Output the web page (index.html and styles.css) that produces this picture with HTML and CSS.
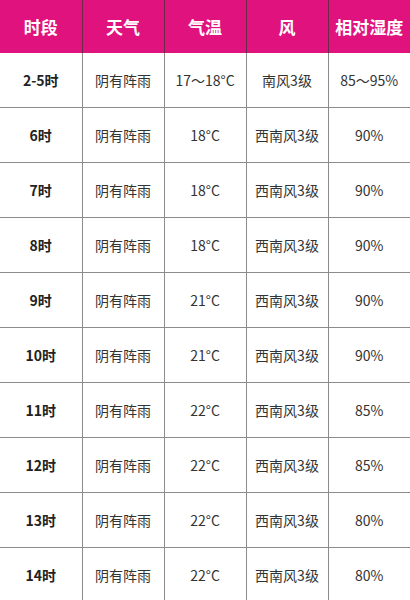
FILE: index.html
```html
<!DOCTYPE html>
<html lang="zh">
<head>
<meta charset="utf-8">
<link rel="stylesheet" href="styles.css">
</head>
<body>
<table class="weather">
  <colgroup><col class="c"><col class="c"><col class="c"><col class="c"><col class="c"></colgroup>
  <thead>
    <tr><th>时段</th><th>天气</th><th>气温</th><th>风</th><th>相对湿度</th></tr>
  </thead>
  <tbody>
    <tr><td class="t">2-5时</td><td>阴有阵雨</td><td>17～18°C</td><td>南风3级</td><td>85～95%</td></tr>
    <tr><td class="t">6时</td><td>阴有阵雨</td><td>18°C</td><td>西南风3级</td><td>90%</td></tr>
    <tr><td class="t">7时</td><td>阴有阵雨</td><td>18°C</td><td>西南风3级</td><td>90%</td></tr>
    <tr><td class="t">8时</td><td>阴有阵雨</td><td>18°C</td><td>西南风3级</td><td>90%</td></tr>
    <tr><td class="t">9时</td><td>阴有阵雨</td><td>21°C</td><td>西南风3级</td><td>90%</td></tr>
    <tr><td class="t">10时</td><td>阴有阵雨</td><td>21°C</td><td>西南风3级</td><td>90%</td></tr>
    <tr><td class="t">11时</td><td>阴有阵雨</td><td>22°C</td><td>西南风3级</td><td>85%</td></tr>
    <tr><td class="t">12时</td><td>阴有阵雨</td><td>22°C</td><td>西南风3级</td><td>85%</td></tr>
    <tr><td class="t">13时</td><td>阴有阵雨</td><td>22°C</td><td>西南风3级</td><td>80%</td></tr>
    <tr><td class="t">14时</td><td>阴有阵雨</td><td>22°C</td><td>西南风3级</td><td>80%</td></tr>
  </tbody>
</table>
</body>
</html>
```
FILE: styles.css
```css
html, body {
  margin: 0;
  padding: 0;
  background: #ffffff;
}
body {
  font-family: "Noto Sans CJK SC", "Open Sans", sans-serif;
  color: #333333;
  overflow: hidden;
}
.weather {
  width: 410px;
  border-collapse: collapse;
  table-layout: fixed;
}
.weather .c {
  width: 82px;
}
.weather th {
  background: #e0127e;
  color: #ffffff;
  font-size: 17px;
  font-weight: 700;
  height: 53px;
  padding: 0;
  text-align: center;
  border-left: 1px solid #6a2a48;
  border-right: 1px solid #6a2a48;
}
.weather td {
  height: 54px;
  padding: 0;
  text-align: center;
  font-size: 14px;
  border: 1px solid #8c8c8c;
  border-top: none;
  white-space: nowrap;
}
.weather tr > :first-child {
  border-left: none;
}
.weather tr > :last-child {
  border-right: none;
}
.weather td.t {
  font-weight: 700;
  color: #222222;
}
```
